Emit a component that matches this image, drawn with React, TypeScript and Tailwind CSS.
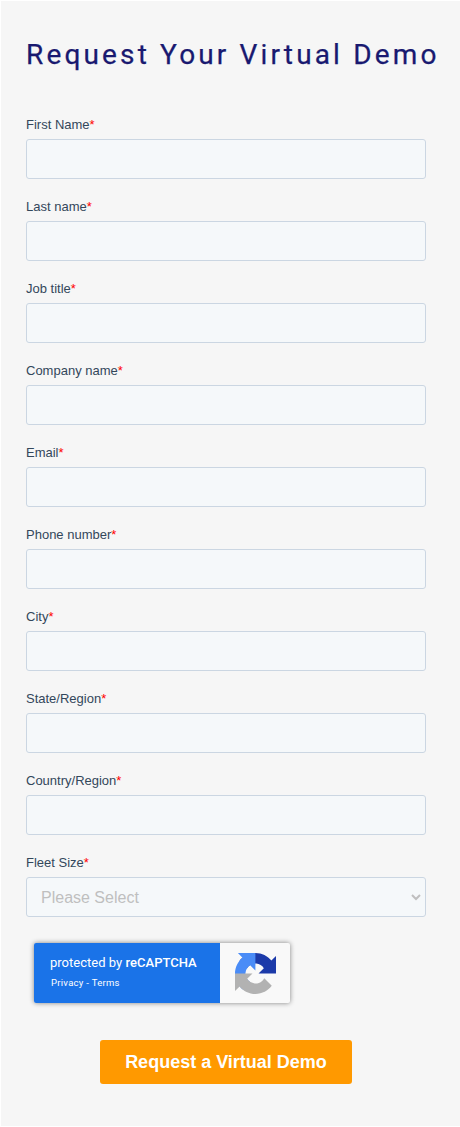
const textFields = [
  'First Name',
  'Last name',
  'Job title',
  'Company name',
  'Email',
  'Phone number',
  'City',
  'State/Region',
  'Country/Region',
];

function FieldLabel({ id, text }: { id: string; text: string }) {
  return (
    <label htmlFor={id} className="block h-5 pt-px text-[13px] leading-5 text-[#33475b]">
      {text}
      <span className="text-[#ff0000]">*</span>
    </label>
  );
}

function RecaptchaLogo() {
  return (
    <svg viewBox="0 0 64 64" className="h-[41px] w-[41px]" aria-hidden="true">
      <path
        fill="#1c3aa9"
        d="M64 31.955l-.033-1.37V4.687l-7.16 7.16C50.948 4.674 42.033.093 32.05.093c-10.4 0-19.622 4.96-25.458 12.64l11.736 11.86a15.55 15.55 0 0 1 4.754-5.334c2.05-1.6 4.952-2.906 8.968-2.906.485 0 .86.057 1.135.163 4.976.393 9.288 3.14 11.828 7.124l-8.307 8.307L64 31.953"
      />
      <path
        fill="#4a8cf7"
        d="M31.862.094l-1.37.033H4.594l7.16 7.16C4.58 13.147 0 22.06 0 32.046c0 10.4 4.96 19.622 12.64 25.458L24.5 45.768a15.55 15.55 0 0 1-5.334-4.754c-1.6-2.05-2.906-4.952-2.906-8.968 0-.485.057-.86.163-1.135.393-4.976 3.14-9.288 7.124-11.828l8.307 8.307L31.86.095"
      />
      <path
        fill="#b2b2b2"
        d="M.001 32.045l.033 1.37v25.898l7.16-7.16c5.86 7.173 14.774 11.754 24.76 11.754 10.4 0 19.622-4.96 25.458-12.64l-11.736-11.86a15.55 15.55 0 0 1-4.754 5.334c-2.05 1.6-4.952 2.906-8.968 2.906-.485 0-.86-.057-1.135-.163-4.976-.393-9.288-3.14-11.828-7.124l8.307-8.307c-10.522.04-22.4.066-27.295-.005"
      />
    </svg>
  );
}

function RecaptchaBadge() {
  return (
    <div className="ml-2 mt-[26px] flex h-[60px] w-[256px] overflow-hidden rounded-[2px] bg-[#f9f9f9] font-['Roboto',sans-serif] shadow-[0_0_5px_gray]">
      <div className="w-[186px] bg-[#1a73e8] pl-4 pt-[10px] text-white">
        <p className="whitespace-nowrap text-[13px] leading-5 tracking-[0.02px]">
          protected by <strong className="font-medium">reCAPTCHA</strong>
        </p>
        <p className="ml-px text-[9.5px] leading-5 tracking-[0.28px]">Privacy - Terms</p>
      </div>
      <div className="flex flex-1 justify-center pt-[10px]">
        <RecaptchaLogo />
      </div>
    </div>
  );
}

export default function App() {
  return (
    <main className="h-[1127px] w-[460px] border-y border-l border-white bg-[#f6f6f6] pl-[25px] font-['Liberation_Sans',Arial,sans-serif]">
      <h1 className="whitespace-nowrap pt-[34px] font-['Roboto',sans-serif] text-[28px] leading-10 tracking-[3.15px] text-[#191970] [-webkit-text-stroke:0.25px_#191970]">
        Request Your Virtual Demo
      </h1>
      <form className="mt-[39px] w-[400px]">
        {textFields.map((text) => (
          <div key={text} className="h-[82px]">
            <FieldLabel id={text} text={text} />
            <input
              id={text}
              type="text"
              className="mt-[5px] block h-10 w-full rounded-[3px] border border-[#cbd6e2] bg-[#f5f8fa] px-[15px] text-base"
            />
          </div>
        ))}
        <FieldLabel id="fleet" text="Fleet Size" />
        <div className="relative mt-[5px]">
          <select
            id="fleet"
            className="block h-10 w-full appearance-none rounded-[3px] border border-[#cbd6e2] bg-[#f5f8fa] px-[14px] pt-0.5 text-base text-[#bfbfbf]"
          >
            <option>Please Select</option>
          </select>
          <svg
            viewBox="0 0 10 7"
            className="pointer-events-none absolute right-[5px] top-[17px] h-[7px] w-[10px]"
            fill="none"
            stroke="#bfbfbf"
            strokeWidth="2"
          >
            <path d="M1 1l4 4 4-4" />
          </svg>
        </div>
        <RecaptchaBadge />
        <button
          type="button"
          className="ml-[74px] mt-[37px] h-11 w-[252px] rounded-[3px] bg-[#ff9900] text-lg font-bold text-white"
        >
          Request a Virtual Demo
        </button>
      </form>
    </main>
  );
}
